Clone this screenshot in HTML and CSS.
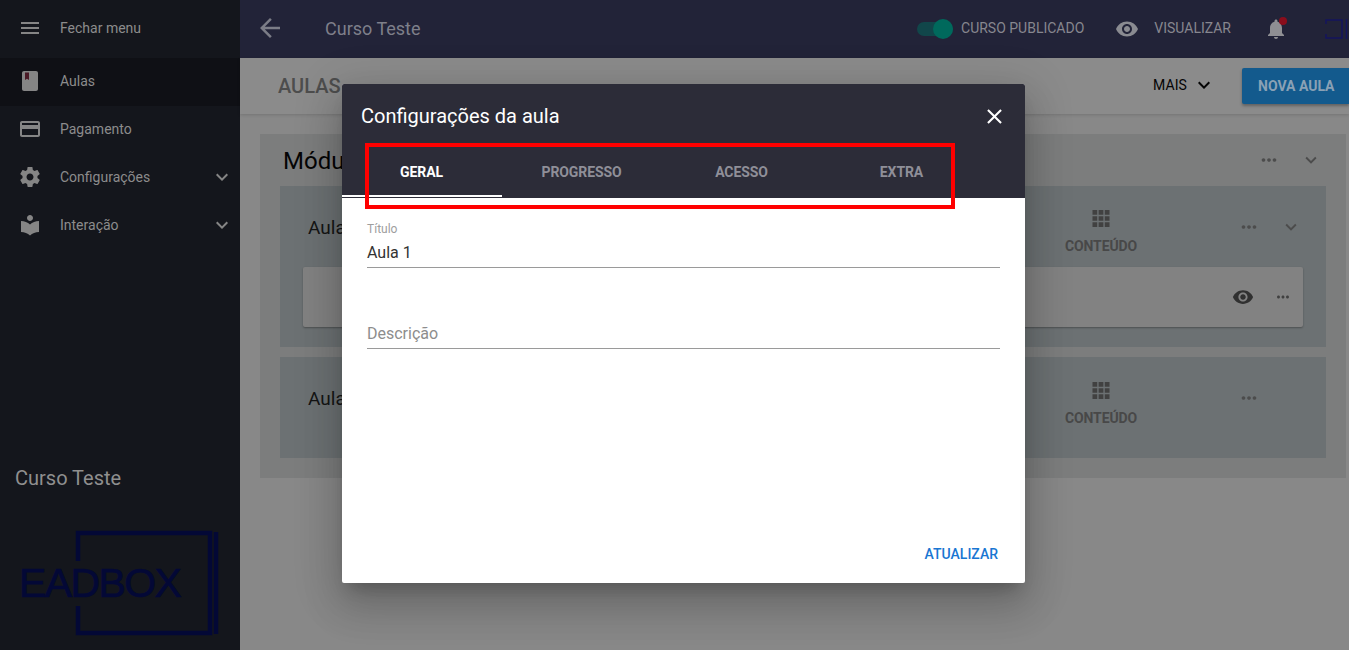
FILE: index.html
```html
<!DOCTYPE html>
<html lang="pt-BR">
<head>
<meta charset="utf-8">
<title>Configurações da aula</title>
<link rel="stylesheet" href="styles.css">
</head>
<body>
<div class="app">
  <aside class="sidebar">
    <nav class="nav">
      <div class="nav-item nav-top"><svg class="nav-icon" viewBox="0 0 24 24"><path d="M3 18h18v-2H3v2zm0-5h18v-2H3v2zm0-7v2h18V6H3z"/></svg><span>Fechar menu</span></div>
      <div class="nav-item active"><svg class="nav-icon" viewBox="0 0 24 24"><path d="M18 2H6c-1.1 0-2 .9-2 2v16c0 1.1.9 2 2 2h12c1.1 0 2-.9 2-2V4c0-1.1-.9-2-2-2z"/><path class="bookmark" d="M7 3.5h4v7.5l-2-1.3L7 11z"/></svg><span>Aulas</span></div>
      <div class="nav-item"><svg class="nav-icon" viewBox="0 0 24 24"><path d="M20 4H4c-1.11 0-1.99.89-1.99 2L2 18c0 1.11.89 2 2 2h16c1.11 0 2-.89 2-2V6c0-1.11-.89-2-2-2zm0 14H4v-6h16v6zm0-10H4V6h16v2z"/></svg><span>Pagamento</span></div>
      <div class="nav-item"><svg class="nav-icon" viewBox="0 0 24 24"><path d="M19.43 12.98c.04-.32.07-.64.07-.98s-.03-.66-.07-.98l2.11-1.65c.19-.15.24-.42.12-.64l-2-3.46c-.12-.22-.39-.3-.61-.22l-2.49 1c-.52-.4-1.08-.73-1.69-.98l-.38-2.65C14.46 2.18 14.25 2 14 2h-4c-.25 0-.46.18-.49.42l-.38 2.65c-.61.25-1.17.59-1.69.98l-2.49-1c-.23-.09-.49 0-.61.22l-2 3.46c-.13.22-.07.49.12.64l2.11 1.65c-.04.32-.07.65-.07.98s.03.66.07.98l-2.11 1.65c-.19.15-.24.42-.12.64l2 3.46c.12.22.39.3.61.22l2.49-1c.52.4 1.08.73 1.69.98l.38 2.65c.03.24.24.42.49.42h4c.25 0 .46-.18.49-.42l.38-2.65c.61-.25 1.17-.59 1.69-.98l2.49 1c.23.09.49 0 .61-.22l2-3.46c.12-.22.07-.49-.12-.64l-2.11-1.65zM12 15.5c-1.93 0-3.5-1.57-3.5-3.5s1.57-3.5 3.5-3.5 3.5 1.57 3.5 3.5-1.57 3.5-3.5 3.5z"/></svg><span>Configurações</span><svg class="nav-chev" viewBox="0 0 24 24"><path d="M16.59 8.59L12 13.17 7.41 8.59 6 10l6 6 6-6z"/></svg></div>
      <div class="nav-item"><svg class="nav-icon" viewBox="0 0 24 24"><path d="M12 11.55C9.64 9.35 6.48 8 3 8v11c3.48 0 6.64 1.35 9 3.55 2.36-2.19 5.52-3.55 9-3.55V8c-3.48 0-6.64 1.35-9 3.55zM12 8c1.66 0 3-1.34 3-3s-1.34-3-3-3-3 1.34-3 3 1.34 3 3 3z"/></svg><span>Interação</span><svg class="nav-chev" viewBox="0 0 24 24"><path d="M16.59 8.59L12 13.17 7.41 8.59 6 10l6 6 6-6z"/></svg></div>
    </nav>
    <div class="side-foot">
      <div class="side-title">Curso Teste</div>
      <svg class="side-logo" viewBox="0 0 200 108">
        <path class="logo-line" d="M58 32V4H190V104H58V77"/>
        <path class="logo-line" d="M196 3V105"/>
        <text class="logo-text" x="-1" y="68">EADBOX</text>
      </svg>
    </div>
  </aside>

  <div class="main">
    <header class="topbar">
      <svg class="back" viewBox="0 0 24 24"><path d="M20 11H7.83l5.59-5.59L12 4l-8 8 8 8 1.41-1.41L7.83 13H20v-2z"/></svg>
      <div class="course">Curso Teste</div>
      <div class="top-actions">
        <div class="switch"><span class="switch-track"></span><span class="switch-thumb"></span></div>
        <span class="top-label">CURSO PUBLICADO</span>
        <svg class="top-eye" viewBox="0 0 24 24"><path d="M12 4.5C7 4.5 2.73 7.61 1 12c1.73 4.39 6 7.5 11 7.5s9.27-3.11 11-7.5c-1.73-4.39-6-7.5-11-7.5zM12 17c-2.76 0-5-2.24-5-5s2.24-5 5-5 5 2.24 5 5-2.24 5-5 5zm0-8c-1.66 0-3 1.34-3 3s1.34 3 3 3 3-1.34 3-3-1.34-3-3-3z"/></svg>
        <span class="top-label">VISUALIZAR</span>
        <div class="bell"><svg viewBox="0 0 24 24"><path d="M12 22c1.1 0 2-.9 2-2h-4c0 1.1.9 2 2 2zm6-6v-5c0-3.07-1.63-5.64-4.5-6.32V4c0-.83-.67-1.5-1.5-1.5s-1.5.67-1.5 1.5v.68C7.64 5.36 6 7.92 6 11v5l-2 2v1h16v-1l-2-2z"/></svg><span class="bell-dot"></span></div>
        <svg class="top-logo" viewBox="0 0 24 20"><path class="top-logo-line" d="M1 5V1H17V19H1V15"/><path class="top-logo-line" d="M21.500 0V20"/></svg>
      </div>
    </header>

    <div class="subheader">
      <div class="sub-title">AULAS</div>
      <div class="more"><span>MAIS</span><svg viewBox="0 0 24 24"><path d="M16.59 8.59L12 13.17 7.41 8.59 6 10l6 6 6-6z"/></svg></div>
      <div class="new-btn">NOVA AULA</div>
    </div>

    <div class="content">
      <section class="module">
        <div class="module-head">
          <h2 class="module-title">Módulo 1</h2>
          <svg class="ico ico-dots" viewBox="0 0 24 24"><path d="M6 10c-1.100 0-2 .9-2 2s.9 2 2 2 2-.9 2-2-.9-2-2-2zm12 0c-1.100 0-2 .9-2 2s.9 2 2 2 2-.9 2-2-.9-2-2-2zm-6 0c-1.100 0-2 .9-2 2s.9 2 2 2 2-.9 2-2-.9-2-2-2z"/></svg>
          <svg class="ico ico-chev" viewBox="0 0 24 24"><path d="M16.59 8.59L12 13.17 7.41 8.59 6 10l6 6 6-6z"/></svg>
        </div>
        <article class="lesson lesson-open">
          <div class="lesson-head">
            <h3 class="lesson-title">Aula 1</h3>
            <div class="lesson-content">
              <svg class="grid" viewBox="0 0 18 18"><path d="M0 0h5v5H0zM6.500 0h5v5h-5zM13 0h5v5h-5zM0 6.500h5v5H0zM6.500 6.500h5v5h-5zM13 6.500h5v5h-5zM0 13h5v5H0zM6.500 13h5v5h-5zM13 13h5v5h-5z"/></svg>
              <span>CONTEÚDO</span>
            </div>
            <svg class="ico ico-dots lesson-dots" viewBox="0 0 24 24"><path d="M6 10c-1.100 0-2 .9-2 2s.9 2 2 2 2-.9 2-2-.9-2-2-2zm12 0c-1.100 0-2 .9-2 2s.9 2 2 2 2-.9 2-2-.9-2-2-2zm-6 0c-1.100 0-2 .9-2 2s.9 2 2 2 2-.9 2-2-.9-2-2-2z"/></svg>
            <svg class="ico ico-chev lesson-chev" viewBox="0 0 24 24"><path d="M16.59 8.59L12 13.17 7.41 8.59 6 10l6 6 6-6z"/></svg>
          </div>
          <div class="card">
            <svg class="card-eye" viewBox="0 0 24 24"><path d="M12 4.500C7 4.500 2.730 7.610 1 12c1.730 4.390 6 7.500 11 7.500s9.270-3.110 11-7.500c-1.730-4.390-6-7.500-11-7.500zM12 17c-2.760 0-5-2.240-5-5s2.240-5 5-5 5 2.240 5 5-2.240 5-5 5zm0-8c-1.660 0-3 1.340-3 3s1.340 3 3 3 3-1.340 3-3-1.340-3-3-3z"/></svg>
            <svg class="card-dots" viewBox="0 0 24 24"><path d="M6 10c-1.100 0-2 .9-2 2s.9 2 2 2 2-.9 2-2-.9-2-2-2zm12 0c-1.100 0-2 .9-2 2s.9 2 2 2 2-.9 2-2-.9-2-2-2zm-6 0c-1.100 0-2 .9-2 2s.9 2 2 2 2-.9 2-2-.9-2-2-2z"/></svg>
          </div>
        </article>
        <article class="lesson lesson-closed">
          <div class="lesson-head">
            <h3 class="lesson-title">Aula 2</h3>
            <div class="lesson-content">
              <svg class="grid" viewBox="0 0 18 18"><path d="M0 0h5v5H0zM6.500 0h5v5h-5zM13 0h5v5h-5zM0 6.500h5v5H0zM6.500 6.500h5v5h-5zM13 6.500h5v5h-5zM0 13h5v5H0zM6.500 13h5v5h-5zM13 13h5v5h-5z"/></svg>
              <span>CONTEÚDO</span>
            </div>
            <svg class="ico ico-dots lesson-dots lesson-dots-last" viewBox="0 0 24 24"><path d="M6 10c-1.100 0-2 .9-2 2s.9 2 2 2 2-.9 2-2-.9-2-2-2zm12 0c-1.100 0-2 .9-2 2s.9 2 2 2 2-.9 2-2-.9-2-2-2zm-6 0c-1.100 0-2 .9-2 2s.9 2 2 2 2-.9 2-2-.9-2-2-2z"/></svg>
          </div>
        </article>
      </section>
    </div>
  </div>
</div>

<div class="modal">
  <div class="modal-head">
    <div class="modal-title-row">
      <h1 class="modal-title">Configurações da aula</h1>
      <svg class="modal-close" viewBox="0 0 24 24"><path d="M19 6.410L17.590 5 12 10.590 6.410 5 5 6.410 10.590 12 5 17.590 6.410 19 12 13.410 17.590 19 19 17.590 13.410 12z"/></svg>
    </div>
    <div class="tabs">
      <div class="tab tab-active">GERAL</div>
      <div class="tab">PROGRESSO</div>
      <div class="tab">ACESSO</div>
      <div class="tab">EXTRA</div>
    </div>
  </div>
  <div class="modal-body">
    <div class="field field-filled">
      <label class="field-label">Título</label>
      <div class="field-value">Aula 1</div>
    </div>
    <div class="field field-empty">
      <div class="field-placeholder">Descrição</div>
    </div>
  </div>
  <div class="modal-foot"><span class="update">ATUALIZAR</span></div>
</div>
<div class="highlight"></div>
</body>
</html>
```

FILE: styles.css
```css
* { box-sizing: border-box; }
html, body { margin: 0; height: 100%; overflow: hidden; }
body { font-family: Roboto, "Liberation Sans", sans-serif; background: #888; position: relative; }
h1, h2, h3 { margin: 0; font-weight: 400; }
svg { display: block; flex: none; }

.app { display: flex; width: 1349px; height: 650px; }

.sidebar { width: 240px; flex: none; background: #14161c; display: flex; flex-direction: column; color: #8b8b8b; }
.nav-item { height: 48px; display: flex; align-items: center; padding: 0 6px 2px 18px; font-size: 14px; color: #8c8c8c; }
.nav-top { height: 58px; }
.active { background: #0f1015; }
.nav-icon { width: 24px; height: 24px; fill: #858585; margin-right: 18px; }
.bookmark { fill: #4a1a26; }
.nav-chev { width: 24px; height: 24px; fill: #858585; margin-left: auto; }
.side-foot { margin-top: auto; padding: 0 0 13px 20px; }
.side-title { font-size: 20px; color: #8f8f8f; margin: 0 0 39px -5px; line-height: 24px; }
.side-logo { width: 200px; height: 108px; overflow: visible; }
.logo-line { fill: none; stroke: #030836; stroke-width: 4.500; }
.logo-text { font-family: "Liberation Sans", sans-serif; font-size: 41px; fill: #030836; stroke: #030836; stroke-width: .7px; letter-spacing: -1.600px; }

.main { flex: 1; min-width: 0; display: flex; flex-direction: column; }

.topbar { height: 58px; flex: none; background: #222338; display: flex; align-items: center; padding-left: 15px; }
.back { width: 30px; height: 30px; fill: #7c7d87; margin-bottom: 2px; }
.course { font-size: 18px; color: #7e7f8a; margin: 0 0 2px 40px; }
.top-actions { margin-left: auto; display: flex; align-items: center; }
.switch { width: 36px; height: 20px; position: relative; margin-right: 8px; }
.switch-track { position: absolute; left: 0; right: 0; top: 3px; height: 14px; border-radius: 7px; background: #11464a; }
.switch-thumb { position: absolute; right: 0; top: 0; width: 20px; height: 20px; border-radius: 50%; background: #00695c; }
.top-label { font-size: 14px; color: #87878f; margin-bottom: 2px; }
.top-eye { width: 24px; height: 24px; fill: #8a8b91; margin: 0 15px 1px 31px; }
.bell { width: 24px; height: 24px; position: relative; margin: 0 37px 0 33px; }
.bell svg { width: 24px; height: 24px; fill: #8f8f93; }
.bell-dot { position: absolute; left: 15px; top: 0; width: 8px; height: 8px; border-radius: 50%; background: #8a0d1c; }
.top-logo { width: 24px; height: 20px; }
.top-logo-line { fill: none; stroke: #14155e; stroke-width: 1.500; }

.subheader { height: 56px; flex: none; background: #8b8b8b; display: flex; align-items: center; padding-left: 38px; box-shadow: 0 1px 3px rgba(0,0,0,.15); position: relative; }
.sub-title { font-size: 20px; font-weight: 500; color: #4d4d4d; }
.more { display: flex; align-items: center; font-size: 14px; letter-spacing: .1px; color: #050505; margin: 0 26px 2px auto; }
.more svg { width: 24px; height: 24px; margin-left: 5px; fill: #050505; }
.new-btn { width: 107px; height: 36px; flex: none; background: #135a8d; color: #8aa1b5; font-size: 14px; font-weight: 700; line-height: 36px; padding-left: 16px; border-radius: 2px 0 0 2px; box-shadow: 0 2px 3px rgba(0,0,0,.3); }

.content { padding: 20px 3px 0 20px; flex: 1; }
.module { background: #7c7d7d; height: 344px; padding: 0 20px; }
.module-head { height: 52px; display: flex; align-items: center; position: relative; }
.module-title { font-size: 24px; color: #050505; margin-left: 3px; padding-top: 2px; flex: 1; line-height: 28px; white-space: nowrap; }
.ico { width: 20px; height: 20px; fill: #4c4c4c; }
.ico-dots { width: 22px; height: 22px; }
.module-head .ico-chev { width: 22px; height: 22px; margin: 0 4px 0 20px; }

.lesson { background: #6c7173; height: 101px; margin-bottom: 10px; }
.lesson-open { height: 161px; }
.lesson-head { height: 81px; display: flex; padding: 23px 28px 0 28px; }
.lesson-title { font-size: 19px; color: #151515; line-height: 38px; height: 38px; flex: 1; }
.lesson-content { width: 120px; margin: 1px 77px 0 0; display: flex; flex-direction: column; align-items: center; color: #484848; font-size: 14px; font-weight: 700; letter-spacing: -.1px; }
.lesson-closed .lesson-content { margin-top: 2px; }
.grid { width: 18px; height: 17px; fill: #414141; margin-bottom: 11px; }
.lesson-dots { margin-top: 7px; }
.lesson-chev { width: 22px; height: 22px; margin: 7px -4px 0 20px; }
.lesson-dots-last { margin-right: 38px; margin-top: 7px; }

.card { height: 60px; margin: 0 23px; background: #828282; border-radius: 2px; box-shadow: 0 1px 2px rgba(0,0,0,.3); display: flex; align-items: center; justify-content: flex-end; padding-right: 11px; }
.card-eye { width: 22px; height: 22px; fill: #303030; margin-right: 20px; }
.card-dots { width: 18px; height: 18px; fill: #404040; }

.modal { position: absolute; left: 342px; top: 84px; width: 683px; height: 499px; background: #fff; border-radius: 2px; box-shadow: 0 11px 15px -7px rgba(0,0,0,.2), 0 24px 38px 3px rgba(0,0,0,.14), 0 9px 46px 8px rgba(0,0,0,.12); display: flex; flex-direction: column; }
.modal-head { height: 114px; flex: none; background: #2c2c38; border-radius: 2px 2px 0 0; display: flex; flex-direction: column; }
.modal-title-row { height: 64px; display: flex; align-items: center; padding: 0 18px 0 19px; justify-content: space-between; }
.modal-title { font-size: 20px; color: #fff; font-weight: 400; }
.modal-close { width: 25px; height: 25px; fill: #fff; }
.tabs { display: flex; height: 49px; padding-bottom: 2px; }
.tab { width: 160px; padding-right: 1px; font-size: 14px; font-weight: 700; letter-spacing: -.1px; color: #8f8f98; text-align: center; line-height: 48px; height: 49px; }
.tab-active { color: #fff; border-bottom: 2px solid #fff; }

.modal-body { flex: 1; padding: 0 25px; }
.field { border-bottom: 1px solid #9a9a9a; }
.field-filled { height: 70px; padding-top: 24px; }
.field-label { display: block; font-size: 12px; line-height: 14px; color: #9e9e9e; }
.field-value { font-size: 16px; line-height: 20px; margin-top: 7px; color: #333; }
.field-empty { height: 41px; margin-top: 40px; padding-top: 16px; }
.field-placeholder { font-size: 16px; line-height: 20px; color: #8d8d8d; }

.modal-foot { height: 58px; flex: none; display: flex; justify-content: flex-end; padding: 21px 27px 0 0; }
.update { font-size: 14px; font-weight: 500; color: #1976d2; line-height: 16px; }

.highlight { position: absolute; left: 365px; top: 143px; width: 590px; height: 66px; border: 4px solid #f00; pointer-events: none; }
```
